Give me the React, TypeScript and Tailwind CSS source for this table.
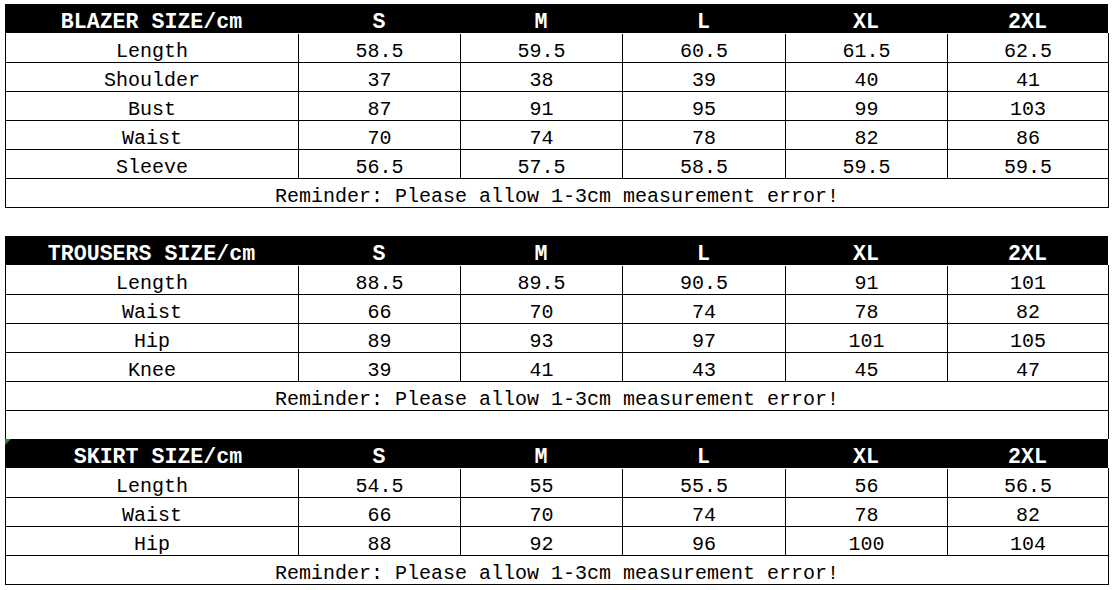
const SIZES = ["S", "M", "L", "XL", "2XL"];

type Table = {
  title: string;
  rows: [string, string[]][];
  blankRow?: boolean;
  marker?: boolean;
};

const TABLES: Table[] = [
  {
    title: "BLAZER SIZE/cm",
    rows: [
      ["Length", ["58.5", "59.5", "60.5", "61.5", "62.5"]],
      ["Shoulder", ["37", "38", "39", "40", "41"]],
      ["Bust", ["87", "91", "95", "99", "103"]],
      ["Waist", ["70", "74", "78", "82", "86"]],
      ["Sleeve", ["56.5", "57.5", "58.5", "59.5", "59.5"]],
    ],
  },
  {
    title: "TROUSERS SIZE/cm",
    rows: [
      ["Length", ["88.5", "89.5", "90.5", "91", "101"]],
      ["Waist", ["66", "70", "74", "78", "82"]],
      ["Hip", ["89", "93", "97", "101", "105"]],
      ["Knee", ["39", "41", "43", "45", "47"]],
    ],
    blankRow: true,
  },
  {
    title: " SKIRT SIZE/cm",
    rows: [
      ["Length", ["54.5", "55", "55.5", "56", "56.5"]],
      ["Waist", ["66", "70", "74", "78", "82"]],
      ["Hip", ["88", "92", "96", "100", "104"]],
    ],
    marker: true,
  },
];

const cols = "grid grid-cols-[293px_162px_162px_163px_162px_1fr]";
const mono = "font-['Liberation_Mono',monospace]";

function SizeTable({ table }: { table: Table }) {
  return (
    <div className="w-[1104px]">
      <div className={`relative h-[29px] w-[1103px] bg-black text-white ${cols}`}>
        {table.marker && (
          <div className="absolute left-0 top-0 h-0 w-0 border-r-[6px] border-t-[6px] border-r-transparent border-t-[#1f8a2e]" />
        )}
        {[table.title, ...SIZES].map((label) => (
          <div
            key={label}
            className={`flex items-end justify-center whitespace-pre text-[21.6px] font-bold leading-[21px] ${mono}`}
          >
            {label}
          </div>
        ))}
      </div>
      <div className={`border-x border-black pt-[1px] text-[20px] leading-[20px] text-black ${mono}`}>
        {table.rows.map(([name, values]) => (
          <div key={name} className={`h-[29px] border-b border-black ${cols}`}>
            {[name, ...values].map((v, i) => (
              <div
                key={i}
                className={`flex items-end justify-center ${i < 5 ? "border-r border-black" : ""}`}
              >
                {v}
              </div>
            ))}
          </div>
        ))}
        <div className="flex h-[29px] items-end justify-center border-b border-black">
          Reminder: Please allow 1-3cm measurement error!
        </div>
        {table.blankRow && <div className="h-[28px]" />}
      </div>
    </div>
  );
}

export default function App() {
  return (
    <div className="h-[590px] w-[1119px] bg-white pl-[5px] pt-[4px]">
      <SizeTable table={TABLES[0]} />
      <div className="mt-[28px]">
        <SizeTable table={TABLES[1]} />
      </div>
      <SizeTable table={TABLES[2]} />
    </div>
  );
}
